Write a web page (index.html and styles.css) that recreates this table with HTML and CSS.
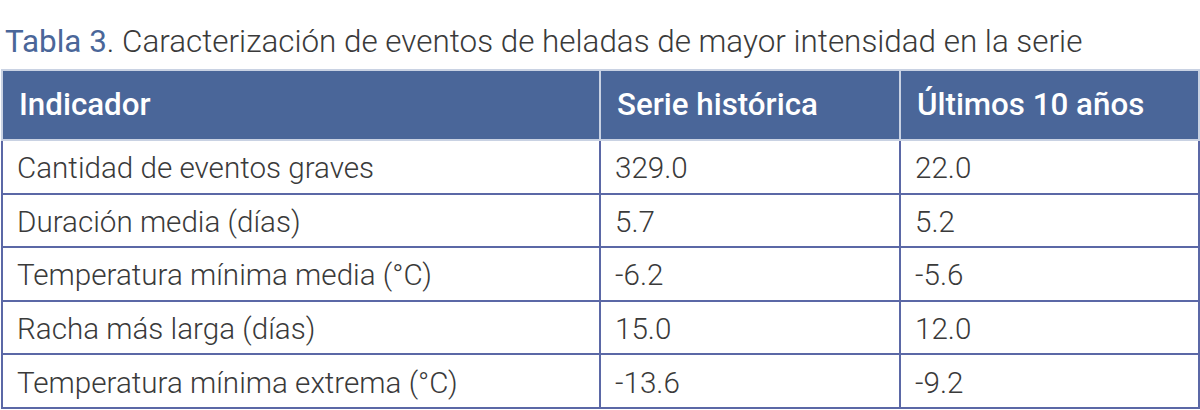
FILE: index.html
```html
<!DOCTYPE html>
<html lang="es">
<head>
<meta charset="utf-8">
<link rel="stylesheet" href="styles.css">
</head>
<body>
<div class="page">
  <p class="caption"><span class="label">Tabla 3</span>. Caracterización de eventos de heladas de mayor intensidad en la serie</p>
  <table class="data">
    <colgroup><col class="c1"><col class="c2"><col class="c3"></colgroup>
    <thead>
      <tr><th>Indicador</th><th>Serie histórica</th><th>Últimos 10 años</th></tr>
    </thead>
    <tbody>
      <tr><td>Cantidad de eventos graves</td><td>329.0</td><td>22.0</td></tr>
      <tr><td>Duración media (días)</td><td>5.7</td><td>5.2</td></tr>
      <tr><td>Temperatura mínima media (°C)</td><td>-6.2</td><td>-5.6</td></tr>
      <tr><td>Racha más larga (días)</td><td>15.0</td><td>12.0</td></tr>
      <tr><td>Temperatura mínima extrema (°C)</td><td>-13.6</td><td>-9.2</td></tr>
    </tbody>
  </table>
</div>
</body>
</html>
```
FILE: styles.css
```css
html, body { margin: 0; padding: 0; background: #fff; }
body { font-family: Roboto, "Open Sans", sans-serif; }
.page { padding: 0 2px 0 1px; }
.caption {
  margin: 0;
  height: 69px;
  box-sizing: border-box;
  padding: 20px 0 0 4px;
  font-size: 31.4px;
  font-weight: 300;
  color: #3a3a3a;
  line-height: 44px;
  white-space: nowrap;
}
.caption .label { font-weight: 400; color: #4a6699; }
.data {
  width: 1197px;
  border-collapse: collapse;
  table-layout: fixed;
}
.c1 { width: 598px; }
.c2 { width: 300px; }
.c3 { width: 299px; }
.data th {
  background: #4a6699;
  color: #fff;
  font-weight: 500;
  font-size: 31.3px;
  text-align: left;
  height: 67px;
  padding: 0 0 1px 16px;
  border: 2px solid #c9d2e3;
}
.data td {
  font-size: 29.6px;
  font-weight: 300;
  color: #3a3a3a;
  height: 48.6px;
  padding: 3px 0 0 14px;
  border: 2px solid #5b68a6;
}
```
